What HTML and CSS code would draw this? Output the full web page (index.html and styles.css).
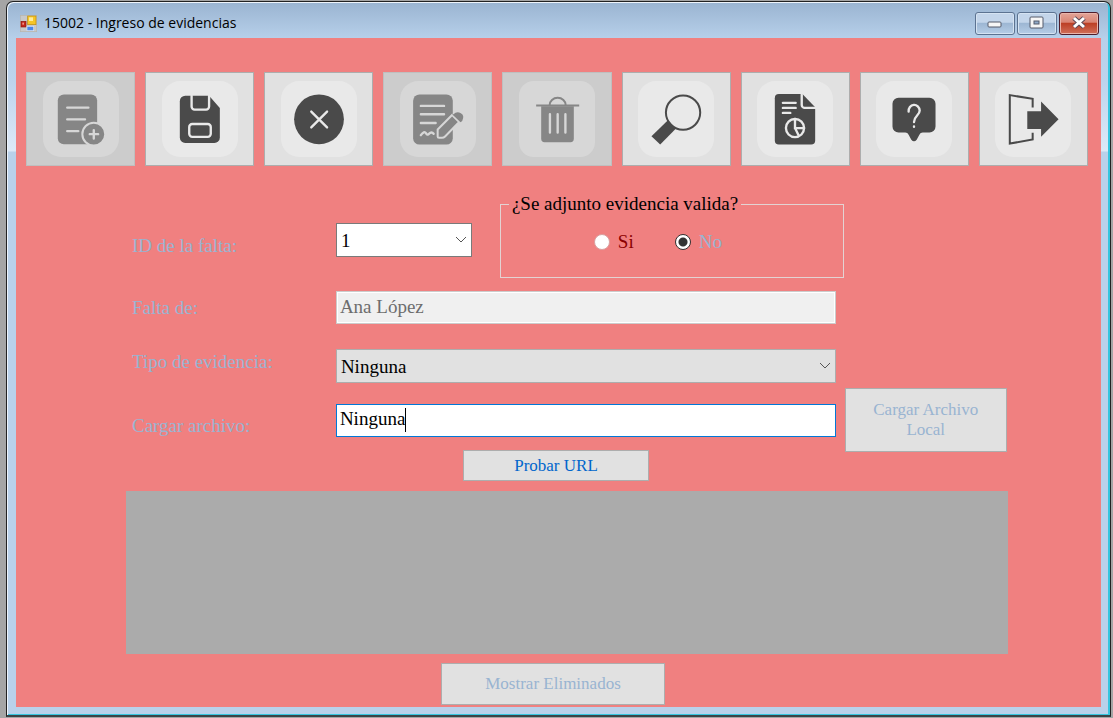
FILE: index.html
```html
<!DOCTYPE html>
<html lang="es">
<head>
<meta charset="utf-8">
<title>15002 - Ingreso de evidencias</title>
<link rel="stylesheet" href="styles.css">
</head>
<body>
<div class="window">
  <header class="titlebar">
    <svg class="app-icon" viewBox="0 0 51 51" aria-hidden="true">
      <rect x="1" y="1" width="49" height="49" fill="#c9c9c9" stroke="#b9b4aa" stroke-width="2"/>
      <rect x="3" y="19" width="15" height="17" fill="#c4281c" stroke="#8e1a12" stroke-width="2"/>
      <rect x="7" y="23" width="5" height="6" fill="#f0948a"/>
      <rect x="23" y="3" width="25" height="26" fill="#f5c526" stroke="#b98a10" stroke-width="2"/>
      <rect x="27" y="7" width="12" height="11" fill="#ffeb9a"/>
      <rect x="21" y="34" width="20" height="13" fill="#4a86e8" stroke="#d5e3f8" stroke-width="2"/>
    </svg>
    <h1 class="title">15002 - Ingreso de evidencias</h1>
    <div class="caption-buttons">
      <button class="caption" type="button" aria-label="Minimizar">
        <svg viewBox="0 0 38 21"><rect x="12" y="9" width="13" height="5" rx="1" fill="#f6f6f6" stroke="#555b6b"/></svg>
      </button>
      <button class="caption" type="button" aria-label="Maximizar">
        <svg viewBox="0 0 38 21"><rect x="12" y="4" width="13" height="11" rx="1" fill="#f6f6f6" stroke="#555b6b"/><rect x="16" y="8" width="5" height="3" fill="#8fa9c8" stroke="#555b6b"/></svg>
      </button>
      <button class="caption caption-close" type="button" aria-label="Cerrar">
        <svg viewBox="0 0 38 21"><path d="M14 5l10 9M24 5l-10 9" stroke="#5d4a58" stroke-width="5"/><path d="M14 5l10 9M24 5l-10 9" stroke="#fff" stroke-width="3"/></svg>
      </button>
    </div>
  </header>

  <main class="client">
    <nav class="toolbar" aria-label="Acciones">
      <button class="tool" type="button" disabled aria-label="Nuevo">
        <svg viewBox="0 0 226 226"><rect class="tile" width="226" height="226" rx="54"/>
          <rect class="ink" x="44" y="40" width="117" height="148" rx="18"/>
          <path class="cut" d="M72 79h63M72 114h53M72 149h33"/>
          <circle class="ink cut-line" cx="151" cy="158" r="34"/>
          <path class="cut" d="M139 158h25M151 146v25"/></svg>
      </button>
      <button class="tool" type="button" aria-label="Guardar">
        <svg viewBox="0 0 226 226"><rect class="tile" width="226" height="226" rx="54"/>
          <path class="ink" d="M69 44H140L172 80V168a16 16 0 0 1-16 16H69a16 16 0 0 1-16-16V60a16 16 0 0 1 16-16z"/>
          <path class="cut" d="M88 44V76a9 9 0 0 0 9 9h34a9 9 0 0 0 9-9V44"/>
          <rect class="cut" x="81" y="128" width="64" height="38" rx="9"/></svg>
      </button>
      <button class="tool" type="button" aria-label="Cancelar">
        <svg viewBox="0 0 226 226"><rect class="tile" width="226" height="226" rx="54"/>
          <circle class="ink" cx="113" cy="114" r="74"/>
          <path class="cut" d="M90 91l47 47M137 91l-47 47"/></svg>
      </button>
      <button class="tool" type="button" disabled aria-label="Editar">
        <svg viewBox="0 0 226 226"><rect class="tile" width="226" height="226" rx="54"/>
          <rect class="ink" x="39" y="40" width="118" height="149" rx="19"/>
          <path class="cut" d="M62 74h69M62 99h69M62 125h44M62 161q10-14 15-6t9 2q8-8 14 0"/>
          <path class="ink cut-line" d="M112 144L155 101L176 122L134 165Q130 169 125 169H116Q112 169 112 165z"/>
          <path class="ink" d="M159 99q10-10 22-3t4 23l-5 4l-25-24z"/></svg>
      </button>
      <button class="tool" type="button" disabled aria-label="Eliminar">
        <svg viewBox="0 0 226 226"><rect class="tile" width="226" height="226" rx="44"/>
          <path class="line" d="M91 72a24 22 0 0 1 48 0M51 73h128"/>
          <path class="ink" d="M66 75H163V172a10 10 0 0 1-10 10H76a10 10 0 0 1-10-10z"/>
          <path class="cut" d="M92 99v54M115 99v54M138 99v54"/></svg>
      </button>
      <button class="tool" type="button" aria-label="Buscar">
        <svg viewBox="0 0 226 226"><rect class="tile" width="226" height="226" rx="54"/>
          <circle class="line" cx="134" cy="94" r="51"/>
          <path class="ink" d="M89 117L113 141L66 189L40 164z"/></svg>
      </button>
      <button class="tool" type="button" aria-label="Reporte">
        <svg viewBox="0 0 226 226"><rect class="tile" width="226" height="226" rx="54"/>
          <path class="ink" d="M65 39H135L173 78V177a12 12 0 0 1-12 12H65a12 12 0 0 1-12-12V51a12 12 0 0 1 12-12z"/>
          <path class="cut" d="M133 40V71a9 9 0 0 0 9 9h32M77 65h38M77 80h38M77 95h22"/>
          <circle class="cut" cx="113" cy="140" r="27"/>
          <path class="cut" d="M113 113v27h27M113 140l11 22"/></svg>
      </button>
      <button class="tool" type="button" aria-label="Ayuda">
        <svg viewBox="0 0 226 226"><rect class="tile" width="226" height="226" rx="54"/>
          <path class="ink" d="M67 50H159a18 18 0 0 1 18 18V135a18 18 0 0 1-18 18H139Q132 153 129 160L121 175Q113 184 105 175L97 160Q94 153 87 153H67a18 18 0 0 1-18-18V68a18 18 0 0 1 18-18z"/>
          <path class="cut" d="M97 91a16 18 0 0 1 33-3C130 102 113 104 113 122M113 135v1"/></svg>
      </button>
      <button class="tool" type="button" aria-label="Salir">
        <svg viewBox="0 0 226 226"><rect class="tile" width="226" height="226" rx="54"/>
          <path class="line" d="M112 79V53L44 42V186L112 174V154"/>
          <path class="ink" d="M96 90H137V61L189 114L137 166V143H96z"/></svg>
      </button>
    </nav>

    <form class="form">
      <div class="row row-id">
        <label for="falta">ID de la falta:</label>
        <div class="row-fields">
          <div class="combo combo-id">
            <select id="falta"><option>1</option></select>
            <svg viewBox="0 0 12 8" aria-hidden="true"><path d="M1 1l5 5 5-5"/></svg>
          </div>
          <fieldset class="group">
            <legend>¿Se adjunto evidencia valida?</legend>
            <label class="radio radio-yes"><input type="radio" name="valida">Si</label>
            <label class="radio"><input type="radio" name="valida" checked>No</label>
          </fieldset>
        </div>
      </div>
      <div class="row row-person">
        <label for="persona">Falta de:</label>
        <input class="text" id="persona" type="text" value="Ana López" disabled>
      </div>
      <div class="row row-type">
        <label for="tipo">Tipo de evidencia:</label>
        <div class="combo combo-flat">
          <select id="tipo"><option>Ninguna</option></select>
          <svg viewBox="0 0 12 8" aria-hidden="true"><path d="M1 1l5 5 5-5"/></svg>
        </div>
      </div>
      <div class="row row-file">
        <label for="archivo">Cargar archivo:</label>
        <div class="text-focus">
          <input class="text" id="archivo" type="text" value="Ninguna">
          <span class="caret"></span>
        </div>
        <button class="button button-file" type="button" disabled>Cargar Archivo Local</button>
      </div>
      <button class="button button-url" type="button">Probar URL</button>
    </form>

    <section class="data-grid" aria-label="Evidencias"></section>
    <button class="button button-deleted" type="button" disabled>Mostrar Eliminados</button>
  </main>
</div>
</body>
</html>
```
FILE: styles.css
```css
* {
  box-sizing: border-box;
}

body {
  margin: 0;
  min-height: 100vh;
  display: flex;
  padding: 1px 2px 1px 6px;
  background: #a5a5a5;
  font-family: "Liberation Serif", "Times New Roman", serif;
  font-size: 19px;
  color: #000;
}

button,
input,
select {
  font: inherit;
  color: inherit;
  margin: 0;
}

.window {
  flex: 1;
  display: flex;
  flex-direction: column;
  padding: 0 9px 8px 9px;
  border: 1px solid #222;
  border-bottom-width: 2px;
  border-bottom-color: #3a4448;
  border-radius: 7px 7px 0 0;
  background: linear-gradient(#9ab4d1 0, #b7d0ea 37px, #bdd4ed 80px, #dde9f7 149px, #b9d1ea 150px);
  box-shadow: inset 1px 1px 0 #eef4fb, inset -2px -1px 0 #35c5de;
}

.titlebar {
  display: flex;
  align-items: center;
  height: 36px;
  padding: 6px 2px 0 4px;
  gap: 7px;
}

.app-icon {
  width: 17px;
  height: 17px;
}

.title {
  flex: 1;
  margin: 0;
  font: 14px/20px "Open Sans", "Noto Sans", sans-serif;
}

.caption-buttons {
  display: flex;
  gap: 2px;
}

.caption {
  width: 40px;
  height: 23px;
  padding: 0;
  border: 1px solid #5c7391;
  border-radius: 3px;
  background: linear-gradient(#c3d5ea 0 45%, #9bb5d2 46%, #b6cde6);
  box-shadow: inset 0 0 0 1px #d5e3f2;
}

.caption-close {
  border-color: #4f1d2b;
  background: linear-gradient(#e3a498 0, #d98473 45%, #bb3c22 46%, #d0705a);
  box-shadow: inset 0 0 0 1px #e9b5ab;
}

.caption svg {
  display: block;
  width: 100%;
  height: 100%;
}

.client {
  flex: 1;
  display: flex;
  flex-direction: column;
  padding: 34px 13px 2px 10px;
  background: #f08080;
}

.toolbar {
  display: grid;
  grid-template-columns: repeat(9, 1fr);
  gap: 10px;
}

.tool {
  display: grid;
  place-items: center;
  height: 94px;
  padding: 0;
  border: 1px solid #adadad;
  background: #e1e1e1;
  color: #4a4a4a;
  --tile: #e9e9e9;
}

.tool:disabled {
  border-color: #bfbfbf;
  background: #ccc;
  color: #868686;
  --tile: #d7d7d7;
}

.tool svg {
  width: 76px;
  height: 76px;
}

.tile {
  fill: var(--tile);
}

.ink {
  fill: currentColor;
}

.line {
  fill: none;
  stroke: currentColor;
  stroke-width: 6;
}

.cut {
  fill: none;
  stroke: var(--tile);
  stroke-width: 7;
  stroke-linecap: round;
}

.cut-line {
  stroke: var(--tile);
  stroke-width: 6;
}

.form {
  display: flex;
  flex-direction: column;
  margin: 28px 81px 0 106px;
}

.row {
  display: grid;
  grid-template-columns: 23.3% 57.1% 1fr;
  align-items: center;
}

.row > label {
  color: #99b4d1;
  line-height: 26px;
}

.row-id > label {
  padding-top: 20px;
}

.row-fields {
  grid-column: 2 / 4;
  display: flex;
  align-items: center;
  gap: 28px;
}

.combo {
  display: grid;
  align-items: center;
}

.combo select,
.combo svg {
  grid-area: 1 / 1;
}

.combo select {
  appearance: none;
  width: 100%;
  height: 34px;
  padding: 0 4px;
  border: 1px solid #7a7a7a;
  border-radius: 0;
  background: #fff;
}

.combo-flat select {
  border-color: #adadad;
  background: #e1e1e1;
}

.combo svg {
  width: 12px;
  height: 8px;
  margin-right: 5px;
  justify-self: end;
  pointer-events: none;
  fill: none;
  stroke: #555;
}

.combo-id {
  width: 136px;
  padding-top: 8px;
}

.group {
  display: flex;
  justify-content: center;
  gap: 41px;
  width: 344px;
  height: 84px;
  margin: 0;
  padding: 17px 36px 0 8px;
  border: 1px solid #e3d3d3;
}

.group legend {
  padding: 0 3px;
  line-height: 20px;
}

.radio {
  display: flex;
  align-items: center;
  align-self: flex-start;
  gap: 8px;
  line-height: 22px;
  color: #99b4d1;
}

.radio-yes {
  color: #8b0000;
}

.radio input {
  appearance: none;
  width: 16px;
  height: 16px;
  border: 1px solid #d9a0a0;
  border-radius: 50%;
  background: #fff;
}

.radio input:checked {
  border-color: #333;
  background: radial-gradient(circle, #333 4px, #fff 5px);
}

.text {
  display: block;
  width: 100%;
  height: 33px;
  padding: 0 3px 2px;
  border: 1px solid #0078d7;
  border-radius: 0;
  background: #fff;
}

.text:disabled {
  border-color: #ccc;
  background: #f0f0f0;
  box-shadow: inset 0 0 0 1px #fff;
  color: #6d6d6d;
}

.row-person {
  margin-top: 13px;
}

.row-type {
  margin-top: 25px;
}

.row-type > label {
  align-self: start;
}

.row-file {
  margin-top: 5px;
}

.row-file > label {
  padding-top: 12px;
}

.text-focus {
  position: relative;
}

.caret {
  position: absolute;
  top: 4px;
  left: 69px;
  width: 1px;
  height: 24px;
  background: #000;
}

.button {
  border: 1px solid #adadad;
  border-radius: 0;
  background: #e1e1e1;
  font-size: 17px;
  line-height: 20px;
}

.button:disabled {
  color: #99b4d1;
}

.button-file {
  height: 64px;
  margin-left: 9px;
  padding: 0 16px;
}

.button-url {
  align-self: center;
  width: 186px;
  height: 31px;
  margin: -2px 27px 0 0;
  color: #0066cc;
}

.data-grid {
  flex: 1;
  min-height: 120px;
  margin: 10px 80px 9px 100px;
  background: #ababab;
}

.button-deleted {
  align-self: center;
  width: 224px;
  height: 42px;
  margin-right: 8px;
}
```
